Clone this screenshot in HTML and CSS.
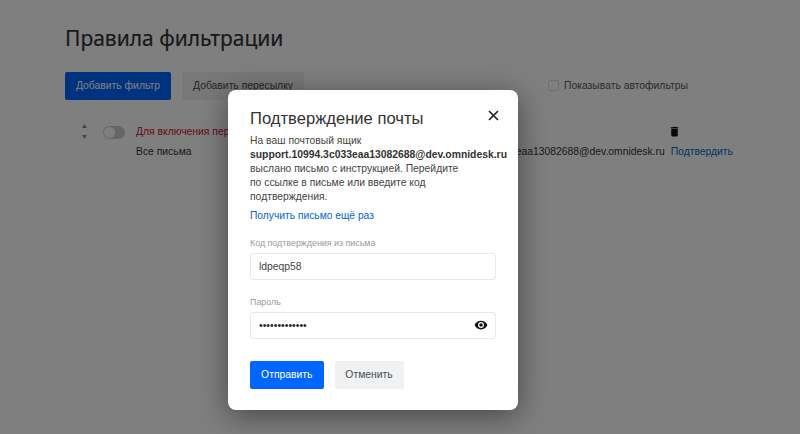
FILE: index.html
```html
<!DOCTYPE html>
<html lang="ru">
<head>
<meta charset="utf-8">
<title>Правила фильтрации</title>
<link rel="stylesheet" href="styles.css">
</head>
<body>
<main class="page">
  <h1 class="page-title">Правила фильтрации</h1>
  <div class="toolbar">
    <button class="btn btn-primary btn-add">Добавить фильтр</button>
    <button class="btn btn-secondary btn-forward">Добавить пересылку</button>
    <label class="auto"><span class="check"></span>Показывать автофильтры</label>
  </div>
  <div class="rule">
    <div class="sort">
      <svg width="5" height="4" viewBox="0 0 6 5"><path d="M3 0l3 5H0z"/></svg>
      <svg width="5" height="4" viewBox="0 0 6 5"><path d="M0 0h6L3 5z"/></svg>
    </div>
    <span class="toggle"><span class="knob"></span></span>
    <div class="rule-body">
      <div class="rule-top">
        <span class="warn">Для включения пересылки подтвердите адрес</span>
        <svg class="trash" width="13" height="13" viewBox="0 0 24 24"><path d="M6 19c0 1.100.9 2 2 2h8c1.100 0 2-.9 2-2V7H6v12zM19 4h-3.500l-1-1h-5l-1 1H5v2h14V4z"/></svg>
      </div>
      <div class="rule-bottom">
        <span>Все письма</span>
        <span class="rule-target"><span>support.10994.3c033eaa13082688@dev.omnidesk.ru</span><a class="confirm">Подтвердить</a></span>
      </div>
    </div>
  </div>
</main>
<div class="overlay">
  <section class="modal">
    <header class="modal-head">
      <h2 class="modal-title">Подтверждение почты</h2>
      <svg class="close" width="11" height="11" viewBox="0 0 11 11"><path d="M1 1l9 9M10 1l-9 9"/></svg>
    </header>
    <p class="modal-text">На ваш почтовый ящик<br><b>support.10994.3c033eaa13082688@dev.omnidesk.ru</b><br>выслано письмо с инструкцией. Перейдите<br>по ссылке в письме или введите код<br>подтверждения.</p>
    <a class="resend">Получить письмо ещё раз</a>
    <label class="field-label field-code">Код подтверждения из письма</label>
    <div class="input"><span>ldpeqp58</span></div>
    <label class="field-label field-pass">Пароль</label>
    <div class="input input-pass">
      <span class="dots">•••••••••••••</span>
      <svg width="14" height="14" viewBox="0 0 24 24"><path d="M12 4.500C7 4.500 2.700 7.600 1 12c1.700 4.400 6 7.500 11 7.500s9.300-3.100 11-7.500c-1.700-4.400-6-7.500-11-7.500zM12 17a5 5 0 1 1 0-10 5 5 0 0 1 0 10zm0-8a3 3 0 1 0 0 6 3 3 0 0 0 0-6z"/></svg>
    </div>
    <div class="actions">
      <button class="btn btn-primary btn-send">Отправить</button>
      <button class="btn btn-secondary btn-cancel">Отменить</button>
    </div>
  </section>
</div>
</body>
</html>
```
FILE: styles.css
```css
* { box-sizing: border-box; }
html, body { margin: 0; height: 100%; overflow: hidden; }
body { background: #fff; font-family: "Liberation Sans", Arial, sans-serif; font-size: 10.35px; color: #333; width: 800px; height: 434px; position: relative; }
.page { padding: 24px 65px 0; }
.page-title { margin: 0; font-family: "Noto Sans", sans-serif; font-weight: 400; font-size: 21px; line-height: 29px; color: #333; -webkit-text-stroke: .2px #333; }
.toolbar { display: flex; align-items: center; margin-top: 19px; }
.btn { border: 0; border-radius: 2px; height: 27.500px; font: 10.35px "Liberation Sans", Arial, sans-serif; padding: 0; }
.btn-primary { background: #0066ff; color: #fff; }
.btn-secondary { background: #f0f1f3; color: #4a4a50; }
.btn-add { width: 106px; }
.btn-forward { width: 122px; margin-left: 11px; }
.auto { display: flex; align-items: center; margin-left: 244px; font-size: 10.35px; color: #555; }
.check { width: 11px; height: 11px; border: 1px solid #ddd; border-radius: 2px; margin-right: 5px; background: #fff; }
.rule { display: flex; align-items: flex-start; margin-top: 24px; padding-left: 17px; }
.sort { display: flex; flex-direction: column; gap: 7px; width: 5px; }
.sort svg { display: block; fill: #888; }
.toggle { width: 22px; height: 13px; border-radius: 7px; background: #ccc; margin: 2px 0 0 16px; padding: 1px; display: block; }
.knob { display: block; width: 11px; height: 11px; border-radius: 50%; background: #fff; }
.rule-body { margin-left: 11px; width: 597px; }
.rule-top { display: flex; align-items: center; justify-content: space-between; height: 16px; color: #d0103a; padding-right: 52px; }
.trash { fill: #111; }
.rule-bottom { display: flex; justify-content: space-between; margin-top: 3px; line-height: 17px; }
.rule-target { display: flex; gap: 6px; }
.confirm { color: #0066cc; }
.overlay { position: absolute; inset: 0; background: rgba(0,0,0,.5); }
.modal { position: absolute; left: 228px; top: 90px; width: 290px; height: 320px; background: #fff; border-radius: 8px; padding: 17px 22px 0; box-shadow: 0 6px 30px rgba(0,0,0,.45); display: flex; flex-direction: column; }
.modal-head { display: flex; align-items: center; justify-content: space-between; }
.modal-title { margin: 0; font-weight: 400; font-size: 16.6px; line-height: 24px; color: #333; }
.close { margin-right: -3px; margin-top: -7px; fill: none; stroke: #222; stroke-width: 1.7; }
.modal-text { margin: 3px 0 0; font-size: 10.35px; line-height: 14px; color: #444; white-space: nowrap; }
.modal-text b { color: #333; font-weight: 700; font-size: 10.36px; }
.resend { margin-top: 5px; color: #0066cc; font-size: 10.25px; line-height: 14px; }
.field-label { display: block; font-size: 8.9px; line-height: 13px; color: #999; }
.field-code { margin-top: 14px; }
.field-pass { margin-top: 16px; }
.input { margin-top: 2.500px; height: 27.500px; border: 1px solid #e6e8eb; border-radius: 3px; padding: 0 8px; display: flex; align-items: center; justify-content: space-between; font-size: 10.35px; color: #444; }
.dots { font-size: 10.5px; color: #222; }
.input-pass svg { fill: #111; margin-right: -1px; }
.actions { display: flex; gap: 11px; margin-top: 22px; }
.btn-send { width: 73.500px; }
.btn-cancel { width: 69px; }
```
